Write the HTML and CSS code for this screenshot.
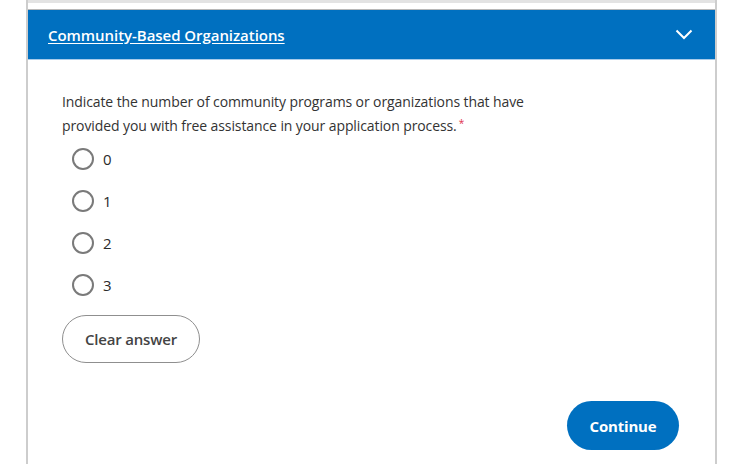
FILE: index.html
```html
<!DOCTYPE html>
<html>
    <head>
        <meta charset="utf-8">
        <title>Community-Based Organizations</title>
        <link rel="stylesheet" href="styles.css">
    </head>
    <body>
        <div class="panel">
            <div class="top-strip"></div>
            <div class="header">
                <a class="header-title" href="#">Community-Based Organizations</a>
                <svg class="chevron" width="18" height="11" viewBox="0 0 18 11">
                    <polyline points="1.5,1.5 9,9 16.5,1.5" fill="none" stroke="#fff" stroke-width="2"/>
                </svg>
            </div>
            <div class="content">
                <p class="question">Indicate the number of community programs or organizations that have provided you with free assistance in your application process.<span class="req">*</span></p>
                <div class="options">
                    <label class="option"><span class="radio"></span>0</label>
                    <label class="option"><span class="radio"></span>1</label>
                    <label class="option"><span class="radio"></span>2</label>
                    <label class="option"><span class="radio"></span>3</label>
                </div>
                <button class="btn-clear">Clear answer</button>
                <div class="actions">
                    <button class="btn-continue">Continue</button>
                </div>
            </div>
        </div>
    </body>
</html>
```

FILE: styles.css
```css
body {
    margin: 0;
    background: #fff;
    font-family: 'Open Sans', sans-serif;
    color: #333;
}

.panel {
    margin-left: 26px;
    width: 687px;
    height: 464px;
    border-left: 2px solid #cdcdcd;
    border-right: 2px solid #cdcdcd;
}

.top-strip {
    height: 3px;
    background: #e3e3e3;
    margin-bottom: 6px;
}

.header {
    height: 49px;
    border-top: 1px solid #b8b8b8;
    border-bottom: 1px solid #a8cbea;
    background: #0070c0;
    display: flex;
    align-items: center;
    justify-content: space-between;
    padding: 0 22px 0 20px;
}

.header-title {
    color: #fff;
    font-size: 15px;
    font-weight: 600;
    letter-spacing: -0.05px;
    text-decoration: underline;
    text-underline-offset: 2px;
}

.content {
    padding: 30px 36px 0 34px;
}

.question {
    margin: 0;
    font-size: 14px;
    line-height: 24px;
    width: 480px;
    letter-spacing: -0.1px;
}

.req {
    display: inline-block;
    margin-left: 2px;
    color: #e0304a;
    font-size: 10px;
    line-height: 10px;
    vertical-align: top;
    margin-top: 4px;
}

.options {
    padding-left: 10px;
}

.option {
    display: flex;
    align-items: center;
    height: 42px;
    font-size: 15px;
    color: #2b2b2b;
}

.radio {
    width: 18px;
    height: 18px;
    border: 2px solid #7a7a7a;
    border-radius: 50%;
    margin-right: 9px;
}

.btn-clear {
    margin-top: 9px;
    width: 138px;
    height: 48px;
    border: 1.5px solid #8f8f8f;
    border-radius: 24px;
    background: #fff;
    font-family: 'Open Sans', sans-serif;
    font-size: 15px;
    font-weight: 600;
    letter-spacing: -0.2px;
    color: #444;
}

.actions {
    display: flex;
    justify-content: flex-end;
    margin-top: 38px;
}

.btn-continue {
    width: 112px;
    height: 49px;
    border: none;
    border-radius: 25px;
    background: #0070c0;
    color: #fff;
    font-family: 'Open Sans', sans-serif;
    font-size: 15px;
    font-weight: 700;
    letter-spacing: -0.2px;
}
```
